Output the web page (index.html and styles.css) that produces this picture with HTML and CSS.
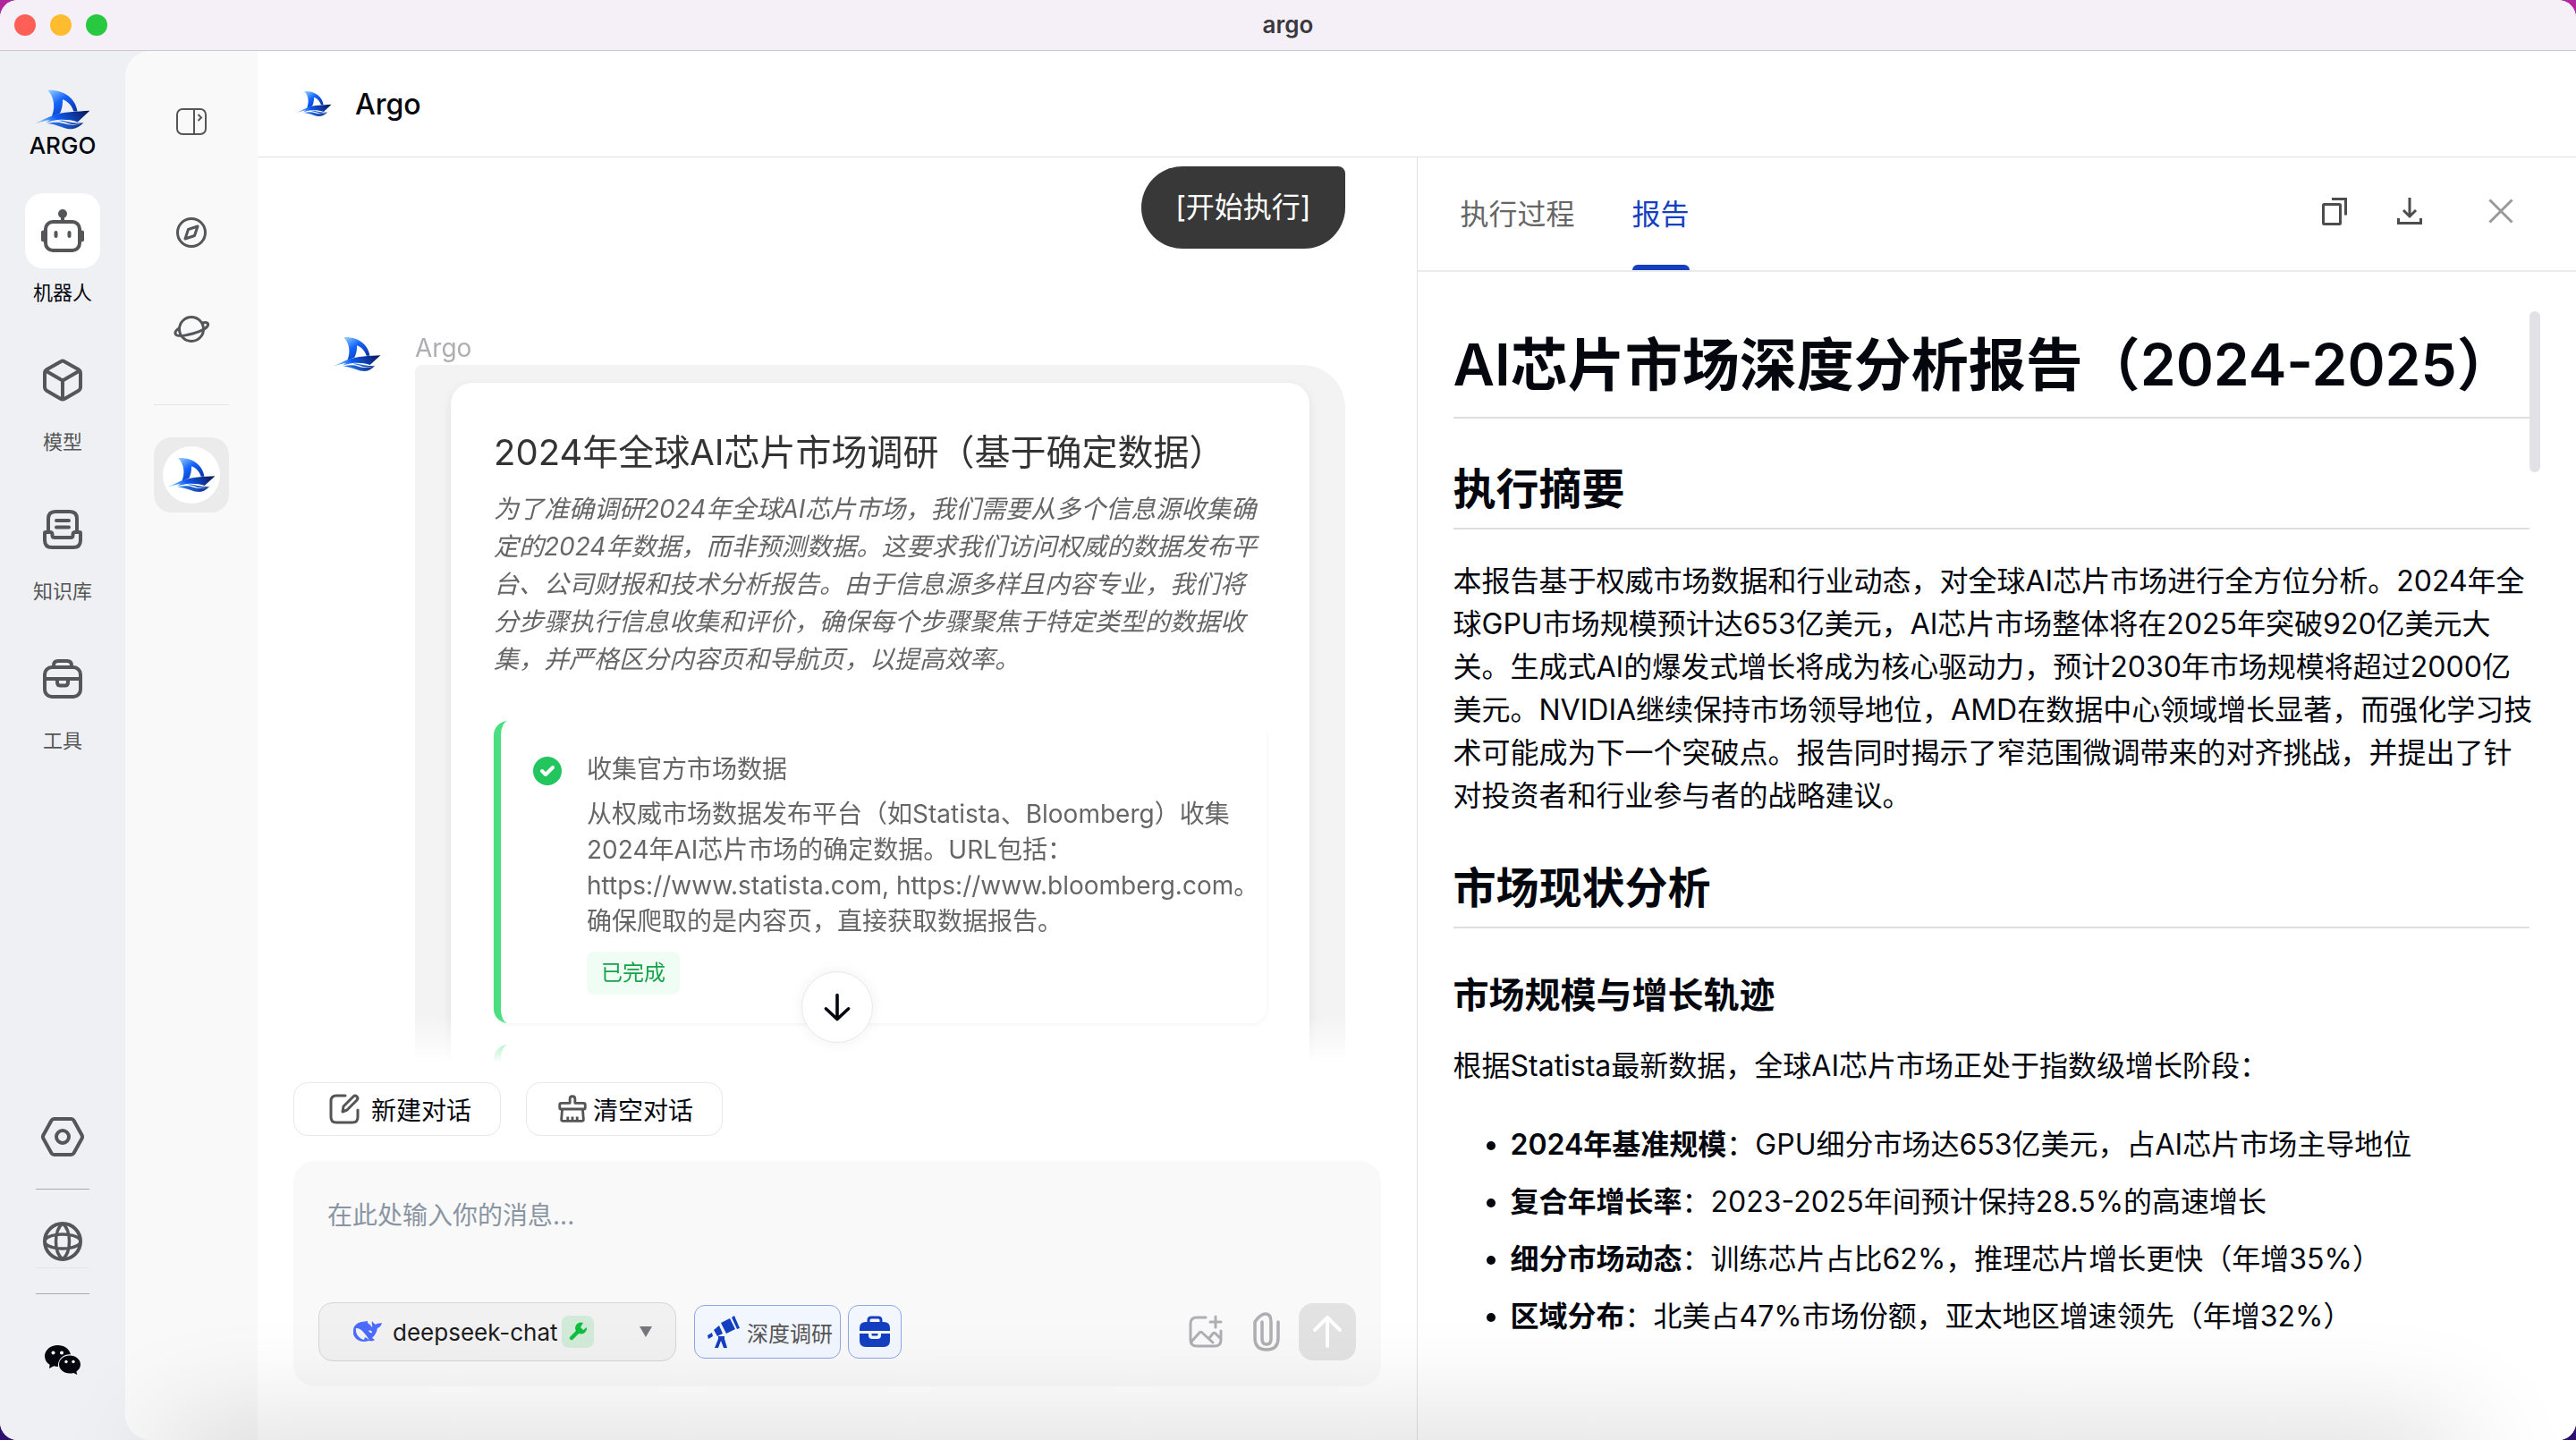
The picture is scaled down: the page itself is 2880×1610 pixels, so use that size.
FILE: index.html
```html
<!DOCTYPE html>
<html lang="zh-CN">
<head>
<meta charset="utf-8">
<meta name="viewport" content="width=device-width, initial-scale=1">
<title>argo</title>
<link rel="stylesheet" href="styles.css">
</head>
<body>
<svg class="sprite" aria-hidden="true">
  <defs>
    <linearGradient id="sailFill" x1="0" y1="0" x2="0.8" y2="1">
      <stop offset="0" stop-color="#9bd4ff"/>
      <stop offset="0.45" stop-color="#1464ff"/>
      <stop offset="1" stop-color="#0b2f9c"/>
    </linearGradient>
    <linearGradient id="hullFill" x1="0" y1="0.4" x2="1" y2="0.2">
      <stop offset="0" stop-color="#7fc4ff"/>
      <stop offset="0.35" stop-color="#0f5cf5"/>
      <stop offset="1" stop-color="#0b1754"/>
    </linearGradient>
    <linearGradient id="waveFill" x1="0" y1="0" x2="1" y2="0">
      <stop offset="0" stop-color="#2c84ff"/>
      <stop offset="1" stop-color="#0c2a86"/>
    </linearGradient>
    <symbol id="boat" viewBox="116 298 192 138">
      <path fill="url(#sailFill)" d="M160 300C215 297 257 328 263 373L250 373C244 354 231 338 212 332C213 350 209 366 203 379L174 391C187 360 184 325 160 300Z"/>
      <path fill="url(#hullFill)" d="M116 415C140 405 160 394 178 388C215 374 260 374 306 371L264 410C248 403 222 401 202 402C184 403 170 408 154 413L168 402Z"/>
      <path fill="url(#waveFill)" d="M158 415C182 409 202 410 218 416C240 423 262 422 285 411C271 428 252 436 234 434C210 431 195 419 158 415Z"/>
      <path fill="url(#waveFill)" d="M196 405C222 402 238 416 280 413C256 422 238 418 222 411Z"/>
    </symbol>
  </defs>
</svg>

<div class="window">
  <header class="titlebar">
    <div class="lights">
      <button class="light light-close" aria-label="关闭窗口"></button>
      <button class="light light-min" aria-label="最小化"></button>
      <button class="light light-max" aria-label="最大化"></button>
    </div>
    <span class="window-title">argo</span>
  </header>

  <div class="shell">
    <nav class="rail">
      <a class="brand" href="#">
        <svg class="brand-boat"><use href="#boat"/></svg>
        <span class="brand-name">ARGO</span>
      </a>
      <ul class="rail-list">
        <li><a class="rail-item active" href="#">
          <span class="tile"><svg class="icon48" viewBox="0 0 48 48" fill="none" stroke="currentColor" stroke-width="4"><circle cx="24" cy="5" r="5" fill="currentColor" stroke="none"/><path d="M24 8v6"/><rect x="5" y="14" width="38" height="32" rx="8"/><path d="M3 25a3 4 0 0 0 0 10zM45 25a3 4 0 0 1 0 10z" fill="currentColor" stroke-width="3"/><path d="M16.500 26v4M31.500 26v4" stroke-linecap="round"/></svg></span>
          <span>机器人</span></a></li>
        <li><a class="rail-item" href="#">
          <span class="tile"><svg class="icon48" viewBox="0 0 48 48" fill="none" stroke="currentColor" stroke-width="4" stroke-linejoin="round"><path d="M22 3.200q2-1.200 4 0l15.500 8.800q2.500 1.500 2.500 4.500v15q0 3-2.500 4.500L26 45q-2 1-4 0L6.500 36Q4 34.500 4 31.500v-15q0-3 2.500-4.500zM5 13.500L24 24.500l19-11M24 24.500V45"/></svg></span>
          <span>模型</span></a></li>
        <li><a class="rail-item" href="#">
          <span class="tile"><svg class="icon48" viewBox="0 0 48 48" fill="none" stroke="currentColor" stroke-width="4"><path d="M8 27V12q0-8 8-8h16q8 0 8 8v15"/><path d="M17 14h14M17 21.500h14" stroke-linecap="round"/><path d="M4 28q0-1 1-1h5q2.500 0 2.500 2.500v1q0 2.500 2.500 2.500h18q2.500 0 2.500-2.500v-1q0-2.500 2.500-2.500h5q1 0 1 1v8q0 8-8 8H12q-8 0-8-8z"/></svg></span>
          <span>知识库</span></a></li>
        <li><a class="rail-item" href="#">
          <span class="tile"><svg class="icon48" viewBox="0 0 48 48" fill="none" stroke="currentColor" stroke-width="4"><rect x="4" y="11" width="40" height="33" rx="8"/><path d="M14 11V9q0-5 5-5h10q5 0 5 5v2M4 24h40M18 25v3q0 3.500 3.500 3.500h5q3.500 0 3.500-3.500v-3"/></svg></span>
          <span>工具</span></a></li>
      </ul>
      <div class="rail-foot">
        <button class="tile" aria-label="设置"><svg class="icon48" viewBox="0 0 48 48" fill="none" stroke="currentColor" stroke-width="4" stroke-linejoin="round"><path d="M14.500 4h19q2 0 3 1.700l9 16.300q1 2 0 4l-9 16.300q-1 1.700-3 1.700h-19q-2 0-3-1.700l-9-16.300q-1-2 0-4l9-16.300q1-1.700 3-1.700z"/><circle cx="24" cy="24" r="7"/></svg></button>
        <hr class="rail-rule">
        <button class="tile tile-lang" aria-label="语言"><svg class="icon48" viewBox="0 0 48 48" fill="none" stroke="currentColor" stroke-width="4"><circle cx="24" cy="24" r="20"/><path d="M24 4c-10 8-10 32 0 40M24 4c10 8 10 32 0 40M4 22c8-8 32-8 40 0M4 26c8 8 32 8 40 0" stroke-width="3.500"/></svg></button>
        <hr class="rail-rule">
        <button class="tile tile-wechat" aria-label="微信"><svg class="icon48" viewBox="0 0 48 48" fill="currentColor"><path d="M18.500 7C10.500 7 4 12.500 4 19.200c0 4 2 7.300 5.600 9.500L9 33l5.200-2.700c1.500.4 3 .6 4.800.6C18 22 26 16.500 33 17.300 31.500 11 25.600 7 18.500 7z"/><path d="M32 18.500c-6.800 0-12 4.500-12 10s5.200 10 12 10c1.500 0 3-.2 4.300-.6l4 2-.9-3.500c2.900-1.800 4.600-4.700 4.600-7.900 0-5.500-5.200-10-12-10z"/><g fill="#fff"><circle cx="13.500" cy="15.500" r="2"/><circle cx="23" cy="15.500" r="2"/><circle cx="28" cy="25.500" r="1.700"/><circle cx="36" cy="25.500" r="1.700"/></g></svg></button>
      </div>
    </nav>

    <aside class="agents">
      <button class="tile" aria-label="展开侧栏"><svg class="icon40" viewBox="0 0 40 40" fill="none" stroke="currentColor" stroke-width="2"><rect x="4" y="6" width="32" height="28" rx="6"/><path d="M23 6v28"/><path d="M27.500 12l3.500 3.500-3.500 3.500"/></svg></button>
      <button class="tile gap-lg" aria-label="发现"><svg class="icon40" viewBox="0 0 40 40" fill="none" stroke="currentColor" stroke-width="3" stroke-linejoin="round"><circle cx="20" cy="20" r="15.500"/><path d="M27 13l-3.500 10.500L13 27l3.500-10.500z"/></svg></button>
      <button class="tile gap-md" aria-label="探索"><svg class="icon40" viewBox="0 0 40 40" fill="none" stroke="currentColor" stroke-width="3"><circle cx="20" cy="20" r="13.500"/><path d="M32 13c4-1 6-.5 6.500 1 1 3.500-5 7.500-17 11-11 3-18.500 3.500-19.500 0-.5-2 1-4 5-6.500"/></svg></button>
      <hr class="agents-rule">
      <button class="tile agent-active" aria-label="Argo"><span class="agent-face"><svg class="boat-lg"><use href="#boat"/></svg></span></button>
    </aside>

    <main class="main">
      <header class="topbar">
        <svg class="boat-sm"><use href="#boat"/></svg>
        <h1 class="topbar-title">Argo</h1>
      </header>

      <div class="columns">
        <section class="chat">
          <div class="stream">
            <div class="stream-fade">
              <div class="bubble">[开始执行]</div>
              <article class="message">
                <svg class="boat-lg avatar"><use href="#boat"/></svg>
                <div class="message-main">
                  <div class="sender">Argo</div>
                  <div class="reply">
                    <div class="plan">
                      <h2 class="plan-title">2024年全球AI芯片市场调研（基于确定数据）</h2>
                      <p class="plan-desc">为了准确调研2024年全球AI芯片市场，我们需要从多个信息源收集确定的2024年数据，而非预测数据。这要求我们访问权威的数据发布平台、公司财报和技术分析报告。由于信息源多样且内容专业，我们将分步骤执行信息收集和评价，确保每个步骤聚焦于特定类型的数据收集，并严格区分内容页和导航页，以提高效率。</p>
                      <div class="step">
                        <svg class="step-check" viewBox="0 0 32 32"><circle cx="16" cy="16" r="16" fill="#22c55e"/><path d="M10 16l4 4 8-8" fill="none" stroke="#fff" stroke-width="4" stroke-linecap="round" stroke-linejoin="round"/></svg>
                        <div class="step-main">
                          <h3 class="step-title">收集官方市场数据</h3>
                          <p class="step-desc">从权威市场数据发布平台（如Statista、Bloomberg）收集<br>2024年AI芯片市场的确定数据。URL包括：<br>https://www.statista.com, https://www.bloomberg.com。<br>确保爬取的是内容页，直接获取数据报告。</p>
                          <span class="pill">已完成</span>
                        </div>
                      </div>
                      <div class="step step-next"></div>
                    </div>
                  </div>
                </div>
              </article>
            </div>
            <button class="to-bottom" aria-label="滚动到底部"><svg class="icon40" viewBox="0 0 40 40" fill="none" stroke="currentColor" stroke-width="4" stroke-linecap="round" stroke-linejoin="round"><path d="M20 5v30M6 22l14 13 14-13"/></svg></button>
          </div>

          <div class="actions">
            <button class="action action-new"><svg class="icon40" viewBox="0 0 40 40" fill="none" stroke="#555" stroke-width="3" stroke-linecap="round" stroke-linejoin="round"><path d="M21 5H11q-6 0-6 6v18q0 6 6 6h18q6 0 6-6V21"/><path d="M30 6q2-2 4 0t0 4L23 21l-5 2 1-6z"/></svg>新建对话</button>
            <button class="action action-clear"><svg class="icon40" viewBox="0 0 40 40" fill="none" stroke="#555" stroke-width="3" stroke-linejoin="round"><path d="M17 13V8q0-3 3-3t3 3v5h10q2 0 2 2v4q0 1-1 1H6q-1 0-1-1v-4q0-2 2-2zM8 20L7 32q0 2 2 2h22q2 0 2-2l-1-12M14.500 34v-5M20 34v-5M25.500 34v-5"/></svg>清空对话</button>
          </div>

          <form class="composer">
            <textarea class="composer-text" aria-label="消息" placeholder="在此处输入你的消息..."></textarea>
            <div class="composer-tools">
              <label class="model">
                <svg class="whale" viewBox="0 0 32 24" fill="#4d6bfe"><path fill-rule="evenodd" d="M2 5C6 0 12 1 16 0l0 2c2 2 4 3 5 5 1-2-1-3 0-7 1 2 3 3 4 4 2-2 4-1 7-2-1 4-3 5-5 6-1 5-3 8-6 11 1 1 2 1 3 2-2 2-5 1-7 1C7 26-2 18 0 10c0-2 1-4 2-5zM3 8c-1 7 4 12 9 13l1-3c2 1 3 2 5 3C14 16 10 8 3 8zm14 3c1 1 2 3 4 2 0-2-2-3-4-2z"/></svg>
                <select class="model-select" aria-label="模型"><option>deepseek-chat</option></select>
                <span class="badge"><svg class="icon24" viewBox="0 0 24 24" fill="none"><path d="M5 19l8-8" stroke="#0dbf3c" stroke-width="4.500" stroke-linecap="round"/><path d="M18 2a6.500 6.500 0 1 0 4 5l-4 3-3-3z" fill="#0dbf3c"/></svg></span>
                <svg class="caret" viewBox="0 0 14 12"><path d="M0 0h14L7 12z" fill="#77777b"/></svg>
              </label>
              <button type="button" class="chip chip-research"><svg class="icon36" viewBox="0 0 36 36" fill="#143fc0"><path d="M27 2l3-2 6 14-3 1zM15 8l10-5 6 12-10 5zM7 16l6-5 4 9-6 3zM0 22l5-3 1 4-5 3zM12 23h7v3l3 10h-4l-3-8-3 8H8l4-10z"/></svg>深度调研</button>
              <button type="button" class="chip chip-tools" aria-label="工具箱"><svg class="icon36" viewBox="0 0 36 36"><path d="M11 8V5q0-3 3-3h8q3 0 3 3v3" fill="none" stroke="#143fc0" stroke-width="3"/><path fill="#143fc0" d="M8 7h20q7 0 7 7v3H1v-3q0-7 7-7zM1 20h10v2q0 4 4 4h6q4 0 4-4v-2h10v8q0 7-7 7H8q-7 0-7-7zM14.500 20h7v1.500q0 1-1 1h-5q-1 0-1-1z"/></svg></button>
              <span class="spacer"></span>
              <button type="button" class="ghost" aria-label="添加图片"><svg class="icon40" viewBox="0 0 40 40" fill="none" stroke="currentColor" stroke-width="3" stroke-linecap="round" stroke-linejoin="round"><path d="M20 4H10q-7 0-7 7v18q0 7 7 7h20q7 0 7-7V19M31 3v12M25 9h12M4 31l9-10q1.500-1.500 3 0l12 11M24 27l4-5q1.500-1.500 3 0l5 5"/></svg></button>
              <button type="button" class="ghost" aria-label="添加附件"><svg class="icon44" viewBox="0 0 44 44" fill="none" stroke="currentColor" stroke-width="3.500" stroke-linecap="round"><path d="M17 11v19q0 6 5 6t5-6V11q0-9-6-9T9 11v18q0 13 13 13t13-13V11"/></svg></button>
              <button type="submit" class="send" aria-label="发送"><svg class="icon40" viewBox="0 0 40 40" fill="none" stroke="#fff" stroke-width="4" stroke-linecap="round" stroke-linejoin="round"><path d="M20 36V4M6 18L20 4l14 14"/></svg></button>
            </div>
          </form>
        </section>

        <section class="panel">
          <div class="tabs">
            <button class="tab">执行过程</button>
            <button class="tab tab-on">报告</button>
            <span class="spacer"></span>
            <button class="tab-tool" aria-label="复制"><svg class="icon36" viewBox="0 0 36 36" fill="none" stroke="#4d4d4d" stroke-width="3"><rect x="5.500" y="10.500" width="19" height="22" rx="1"/><path d="M15 4.500h15.500v18"/></svg></button>
            <button class="tab-tool" aria-label="下载"><svg class="icon36" viewBox="0 0 36 36" fill="none" stroke="#4d4d4d" stroke-width="3"><path d="M18 3v20M11 17l7 7 7-7M5.500 26v5.500h25V26"/></svg></button>
            <button class="tab-tool tab-close" aria-label="关闭"><svg class="icon36" viewBox="0 0 36 36" fill="none" stroke="#999" stroke-width="3"><path d="M5.500 5.500l25 25M30.500 5.500l-25 25"/></svg></button>
          </div>
          <div class="report-wrap">
            <article class="report">
              <h1>AI芯片市场深度分析报告（2024-2025）</h1>
              <h2>执行摘要</h2>
              <p>本报告基于权威市场数据和行业动态，对全球AI芯片市场进行全方位分析。2024年全球GPU市场规模预计达653亿美元，AI芯片市场整体将在2025年突破920亿美元大关。生成式AI的爆发式增长将成为核心驱动力，预计2030年市场规模将超过2000亿美元。NVIDIA继续保持市场领导地位，AMD在数据中心领域增长显著，而强化学习技术可能成为下一个突破点。报告同时揭示了窄范围微调带来的对齐挑战，并提出了针对投资者和行业参与者的战略建议。</p>
              <h2>市场现状分析</h2>
              <h3>市场规模与增长轨迹</h3>
              <p>根据Statista最新数据，全球AI芯片市场正处于指数级增长阶段：</p>
              <ul>
                <li><strong>2024年基准规模</strong>：GPU细分市场达653亿美元，占AI芯片市场主导地位</li>
                <li><strong>复合年增长率</strong>：2023-2025年间预计保持28.5%的高速增长</li>
                <li><strong>细分市场动态</strong>：训练芯片占比62%，推理芯片增长更快（年增35%）</li>
                <li><strong>区域分布</strong>：北美占47%市场份额，亚太地区增速领先（年增32%）</li>
              </ul>
            </article>
            <div class="scroll-thumb"></div>
          </div>
        </section>
      </div>
    </main>
  </div>
  <div class="dock-shade"></div>
</div>
</body>
</html>
```
FILE: styles.css
```css
* { box-sizing: border-box; }

body {
  margin: 0;
  height: 100vh;
  overflow: hidden;
  background: linear-gradient(#b0259b, #2e1070);
  color: #05070f;
  font-family: Inter, "Noto Sans CJK SC", sans-serif;
  font-size: 28px;
  text-spacing-trim: space-all;
}

h1, h2, h3, p, ul { margin: 0; padding: 0; font-weight: 400; }
ul { list-style: none; }
a { color: inherit; text-decoration: none; }
svg { display: block; flex: none; }

button {
  display: flex;
  align-items: center;
  justify-content: center;
  padding: 0;
  border: 0;
  background: none;
  color: inherit;
  font: inherit;
}

.sprite { position: absolute; width: 0; height: 0; }
.icon24 { width: 24px; height: 24px; }
.icon36 { width: 36px; height: 36px; }
.icon40 { width: 40px; height: 40px; }
.icon44 { width: 44px; height: 44px; }
.icon48 { width: 48px; height: 48px; }
.boat-sm { width: 40px; height: 30px; }
.boat-lg { width: 54px; height: 40px; }
.spacer { flex: 1; }

/* Window frame */
.window {
  position: relative;
  display: flex;
  flex-direction: column;
  height: 100%;
  overflow: hidden;
  border-radius: 20px;
  background: #fff;
}

.titlebar {
  display: grid;
  grid-template-columns: 1fr auto 1fr;
  align-items: center;
  flex: none;
  height: 57px;
  padding: 0 16px;
  border-bottom: 1px solid #cdc9cf;
  background: #f5f0f8;
}
.lights { display: flex; gap: 16px; }
.light { width: 24px; height: 24px; border-radius: 50%; }
.light-close { background: #ff5f57; }
.light-min { background: #febc2e; }
.light-max { background: #28c840; }
.window-title { padding-bottom: 2px; color: #3b383d; font-size: 26px; font-weight: 600; }

.shell { display: flex; flex: 1; min-height: 0; background: #eff0f3; }

/* Primary navigation */
.rail {
  display: flex;
  flex-direction: column;
  align-items: center;
  flex: none;
  width: 140px;
  padding: 43px 0 47px;
  color: #555658;
}
.brand { display: flex; flex-direction: column; align-items: center; }
.brand-boat { width: 62px; height: 45px; }
.brand-name { color: #05070f; font-size: 26px; font-weight: 500; line-height: 36px; }
.rail-list { display: grid; gap: 41px; margin-top: 35px; }
.rail-item {
  display: flex;
  flex-direction: column;
  align-items: center;
  gap: 12px;
  font-size: 22px;
  line-height: 30px;
}
.tile { display: flex; align-items: center; justify-content: center; flex: none; width: 84px; height: 84px; border-radius: 20px; }
.active { color: #05070f; }
.active .tile { background: #fff; color: #555658; }
.rail-foot { display: flex; flex-direction: column; align-items: center; margin-top: auto; }
.rail-rule { width: 60px; height: 1px; margin: 16px 0; border: 0; background: #a9aaac; }
.tile-lang { position: relative; }
.tile-lang::after { content: ""; position: absolute; bottom: 12px; left: 12px; width: 60px; height: 1px; background: #e6e7ea; }
.tile-wechat { margin-top: 16px; color: #05070f; }

/* Agent list */
.agents {
  display: flex;
  flex-direction: column;
  align-items: center;
  flex: none;
  width: 148px;
  padding-top: 37px;
  border-radius: 28px 0 0 28px;
  background: #f9f9f9;
  color: #555658;
}
.gap-lg { margin-top: 40px; }
.gap-md { margin-top: 24px; }
.agents-rule { width: 84px; height: 1px; margin: 42px 0 36px; border: 0; background: #e6e6e6; }
.agent-active { background: #ebebeb; }
.agent-face { display: flex; align-items: center; justify-content: center; width: 64px; height: 64px; border-radius: 50%; background: #fff; }

/* Main area */
.main { display: flex; flex-direction: column; flex: 1; min-width: 0; background: #fff; }
.topbar { display: flex; align-items: center; gap: 26px; flex: none; height: 119px; padding-left: 43px; border-bottom: 1px solid #e2e2e4; }
.topbar-title { font-size: 32px; font-weight: 500; }
.columns { display: flex; flex: 1; min-height: 0; }
.chat, .panel { display: flex; flex-direction: column; flex: 1 1 0; min-width: 0; }

/* Conversation */
.chat { padding-bottom: 60px; }
.stream { position: relative; flex: 1; min-height: 0; }
.stream-fade {
  display: flex;
  flex-direction: column;
  height: 100%;
  overflow: hidden;
  padding: 10px 80px 0 84px;
  -webkit-mask-image: linear-gradient(#000 calc(100% - 52px), transparent);
  mask-image: linear-gradient(#000 calc(100% - 52px), transparent);
}
.bubble {
  align-self: flex-end;
  flex: none;
  padding: 22px 38px;
  border-radius: 46px 8px 46px 46px;
  background: #383838;
  color: #fff;
  font-size: 32px;
  line-height: 48px;
}
.message { display: flex; gap: 38px; flex: none; margin-top: 92px; }
.avatar { margin-top: 6px; }
.message-main { flex: 1; min-width: 0; }
.sender { color: #aeaeb2; line-height: 38px; }
.reply { padding: 20px 40px; border-radius: 8px 48px 48px 48px; background: #f3f3f3; }
.plan { padding: 50px 48px; border-radius: 24px; background: #fff; box-shadow: 0 4px 12px rgba(0, 0, 0, 0.08); }
.plan-title { color: #333; font-size: 40px; line-height: 56px; }
.plan-desc { margin: 14px 0 48px; color: #666; font-style: italic; line-height: 42px; }
.step {
  display: flex;
  gap: 28px;
  padding: 32px 8px 32px 36px;
  border-left: 8px solid #4ade80;
  border-radius: 16px;
  box-shadow: 0 2px 4px rgba(0, 0, 0, 0.05);
  color: #666;
}
.step-next { height: 338px; margin-top: 24px; }
.step-check { width: 32px; height: 32px; margin-top: 8px; }
.step-main { flex: 1; min-width: 0; }
.step-title { font-size: 28px; line-height: 44px; }
.step-desc { margin: 8px 0 14px; line-height: 40px; }
.pill {
  display: block;
  width: fit-content;
  padding: 0 16px;
  border-radius: 8px;
  background: #f0fdf4;
  color: #16a34a;
  font-size: 24px;
  line-height: 48px;
}
.to-bottom {
  position: absolute;
  bottom: 22px;
  left: calc(50% - 40px);
  width: 80px;
  height: 80px;
  border: 1px solid #e8e8e8;
  border-radius: 50%;
  background: #fff;
  box-shadow: 0 0 16px rgba(0, 0, 0, 0.06);
}
.to-bottom svg { width: 36px; height: 36px; }

.actions { display: flex; gap: 28px; margin: 22px 40px 28px; }
.action { height: 60px; gap: 8px; border: 1px solid #e8e8ea; border-radius: 16px; }
.action-new { padding: 0 32px 0 36px; }
.action-new svg { margin-right: 2px; }
.action-clear { gap: 4px; padding: 0 32px; }
.action-clear svg { width: 38px; height: 38px; }

.composer { margin: 0 40px; padding: 28px; border-radius: 24px; background: #f9f9f9; }
.composer-text {
  display: block;
  width: 100%;
  height: 130px;
  padding: 12px 10px;
  border: 0;
  outline: 0;
  resize: none;
  background: none;
  font: inherit;
  line-height: 42px;
}
.composer-text::placeholder { color: #8a95a3; opacity: 1; }
.composer-tools { display: flex; align-items: center; height: 66px; }
.model {
  display: flex;
  align-items: center;
  width: 400px;
  height: 66px;
  padding: 0 26px 0 38px;
  border: 1px solid #d6d6d6;
  border-radius: 16px;
  background: #f1f1f1;
}
.whale { width: 32px; height: 24px; margin-right: 12px; }
.model-select {
  padding: 0;
  border: 0;
  outline: 0;
  appearance: none;
  background: none;
  color: #1c1c1e;
  font-family: inherit;
  font-size: 26px;
}
.badge {
  display: flex;
  align-items: center;
  justify-content: center;
  width: 36px;
  height: 36px;
  margin-left: 4px;
  border-radius: 8px;
  background: #d2ebd8;
}
.caret { width: 14px; height: 12px; margin-left: auto; }
.chip { height: 60px; border: 1px solid #8fa6e6; border-radius: 12px; background: #f2f6ff; color: #555; font-size: 24px; }
.chip-research { gap: 8px; margin: 0 8px 0 20px; padding: 0 8px 0 14px; }
.chip-tools { width: 60px; }
.ghost { width: 68px; height: 64px; color: #afafb3; }
.send { width: 64px; height: 64px; margin-left: 2px; border-radius: 16px; background: #e2e2e2; }

/* Report panel */
.panel { border-left: 1px solid #e2e2e4; }
.tabs { display: flex; flex: none; height: 128px; padding: 0 42px 0 48px; border-bottom: 2px solid #ebebeb; }
.tab {
  position: relative;
  margin-right: 64px;
  padding-top: 2px;
  color: #666;
  font-size: 32px;
  line-height: 48px;
}
.tab-on { color: #143fc0; }
.tab-on::after {
  content: "";
  position: absolute;
  right: 0;
  bottom: 0;
  left: 0;
  height: 6px;
  border-radius: 6px 6px 0 0;
  background: #143fc0;
}
.tab-tool { width: 84px; padding-bottom: 6px; }
.tab-close { margin-left: 18px; }
.report-wrap { display: flex; flex: 1; min-height: 0; overflow: hidden; padding: 44px 40px 0; }
.report { flex: 1; min-width: 0; font-size: 32px; line-height: 48px; }
.report h1 {
  margin-top: 20px;
  padding-bottom: 18px;
  border-bottom: 2px solid #dbdfe3;
  font-size: 64px;
  font-weight: 600;
  line-height: 80px;
}
.report h2 {
  margin: 50px 0 34px;
  padding-bottom: 14px;
  border-bottom: 2px solid #dbdfe3;
  font-size: 48px;
  font-weight: 600;
  line-height: 58px;
}
.report h3 { margin: 50px 0 30px; font-size: 40px; font-weight: 600; line-height: 50px; }
.report p { margin-right: -8px; }
.report ul { display: grid; gap: 16px; margin-top: 40px; padding-left: 64px; list-style: disc; }
.report strong { font-weight: 600; }
.scroll-thumb { flex: none; width: 12px; height: 180px; border-radius: 6px; background: #e1e1e6; }

/* Soft shade rising from the lower edge */
.dock-shade {
  position: absolute;
  right: 130px;
  bottom: -60px;
  left: 190px;
  height: 60px;
  box-shadow: 0 0 130px rgba(0, 0, 0, 0.24);
  pointer-events: none;
}
```
